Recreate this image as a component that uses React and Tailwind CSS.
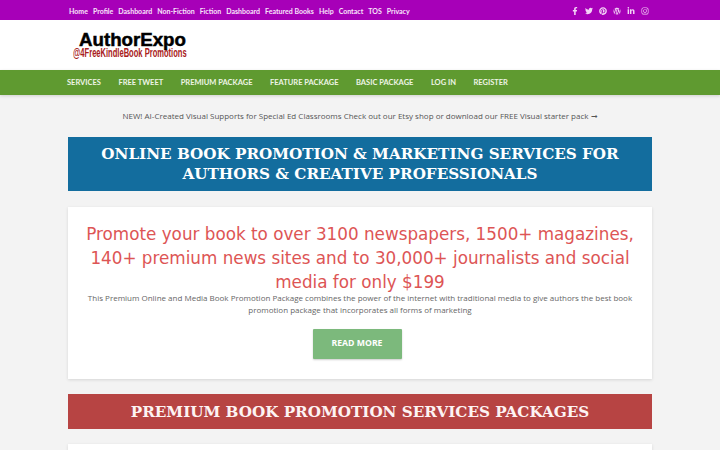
import React from 'react';
import { FaFacebookF, FaTwitter, FaPinterest, FaWordpress, FaLinkedinIn, FaInstagram } from 'react-icons/fa';

const topLinks = ['Home', 'Profile', 'Dashboard', 'Non-Fiction', 'Fiction', 'Dashboard', 'Featured Books', 'Help', 'Contact', 'TOS', 'Privacy'];
const navLinks = ['SERVICES', 'FREE TWEET', 'PREMIUM PACKAGE', 'FEATURE PACKAGE', 'BASIC PACKAGE', 'LOG IN', 'REGISTER'];
const socials = [FaFacebookF, FaTwitter, FaPinterest, FaWordpress, FaLinkedinIn, FaInstagram];

export default function App() {
  return (
    <div className="h-[450px] overflow-hidden bg-[#f3f3f3] font-['Open_Sans',sans-serif] text-[#666]">
      {/* Top bar */}
      <div className="h-5 bg-[#a700b8]">
        <div className="flex h-full items-center justify-between pt-[2px] pl-[69px] pr-[71px]">
          <div className="flex gap-[5px] font-['Lato',sans-serif] text-[7px] font-bold text-[#f8e4fa]">
            {topLinks.map((link, i) => (
              <span key={i}>{link}</span>
            ))}
          </div>
          <div className="flex items-center gap-[6px] text-[8px] text-[#f3d4f6]">
            {socials.map((Icon, i) => (
              <Icon key={i} />
            ))}
          </div>
        </div>
      </div>

      {/* Logo */}
      <div className="flex h-[50px] bg-white pl-[73px] pt-[13px]">
        <div className="flex w-[114px] flex-col items-start leading-none">
          <span className="ml-[6px] font-['Liberation_Sans',sans-serif] text-[18.7px] leading-[14px] font-bold text-black [-webkit-text-stroke:0.5px_black]">AuthorExpo</span>
          <span className="mt-px origin-top-left scale-x-[0.63] font-['Liberation_Sans',sans-serif] text-[12px] leading-[10px] font-bold whitespace-nowrap text-[#a82020]">@4FreeKindleBook Promotions</span>
        </div>
      </div>

      {/* Main nav */}
      <div className="flex h-[25px] items-center gap-[17.5px] bg-[#5f9a30] pt-px pl-[67px] font-['Lato',sans-serif] text-[7.5px] font-bold text-[#eef5e6] shadow-[0_1px_3px_rgba(0,0,0,0.15)]">
        {navLinks.map((link) => (
          <span key={link}>{link}</span>
        ))}
      </div>

      <div className="mx-[68px]">
        <p className="pt-[14px] text-center text-[8px] leading-[14px] text-[#555]">
          NEW! AI-Created Visual Supports for Special Ed Classrooms Check out our Etsy shop or download our FREE Visual starter pack ➞
        </p>

        <div className="mt-[14px] flex h-[54px] items-center justify-center bg-[#136d9e] text-center font-['DejaVu_Serif',serif] text-[15.2px] leading-5 font-bold text-white">
          <h1>ONLINE BOOK PROMOTION &amp; MARKETING SERVICES FOR<br />AUTHORS &amp; CREATIVE PROFESSIONALS</h1>
        </div>

        <div className="mt-4 h-[172px] bg-white px-[15px] pt-[15px] text-center shadow-[0_1px_3px_rgba(0,0,0,0.12)]">
          <h2 className="font-['DejaVu_Sans',sans-serif] text-[16.8px] leading-6 text-[#dd5555]">
            Promote your book to over 3100 newspapers, 1500+ magazines, 140+ premium news sites and to 30,000+ journalists and social media for only $199
          </h2>
          <p className="-mt-[2px] text-[8px] leading-3 text-[#666]">
            This Premium Online and Media Book Promotion Package combines the power of the internet with traditional media to give authors the best book promotion package that incorporates all forms of marketing
          </p>
          <button className="mt-[13px] mr-[6px] h-[30px] w-[89px] rounded-[1px] bg-[#7cb97c] text-[8.7px] font-bold text-white shadow-[0_1px_2px_rgba(0,0,0,0.2)]">
            READ MORE
          </button>
        </div>

        <div className="mt-[15px] flex h-[35px] items-center justify-center bg-[#b74443] pt-px font-['DejaVu_Serif',serif] text-[15.2px] font-bold text-[#fdf3f3]">
          <h2>PREMIUM BOOK PROMOTION SERVICES PACKAGES</h2>
        </div>

        <div className="mt-[15px] h-10 bg-white shadow-[0_1px_3px_rgba(0,0,0,0.12)]" />
      </div>
    </div>
  );
}
